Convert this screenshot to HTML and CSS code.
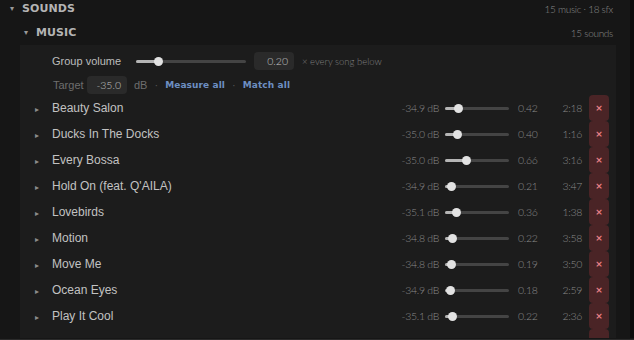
FILE: index.html
```html
<!DOCTYPE html>
<html lang="en">
<head>
  <meta charset="UTF-8" />
  <title>Sounds</title>
  <link rel="stylesheet" href="styles.css">
</head>
<body>
  <div class="screen">
    <div class="main">
      <div class="head head-top">
        <span class="caret">▾</span>
        <span class="head-title">SOUNDS</span>
        <span class="head-meta">15 music · 18 sfx</span>
      </div>
      <div class="head head-sub">
        <span class="caret">▾</span>
        <span class="head-title">MUSIC</span>
        <span class="head-meta">15 sounds</span>
      </div>

      <div class="panel">
        <div class="group-row">
          <span class="label">Group volume</span>
          <div class="slider wide"><div class="fill" style="width:20%"></div><div class="thumb" style="left:20%"></div></div>
          <div class="box">0.20</div>
          <span class="hint">× every song below</span>
        </div>
        <div class="target-row">
          <span class="label dim">Target</span>
          <div class="box">-35.0</div>
          <span class="dim">dB</span>
          <span class="sep">·</span>
          <a class="link">Measure all</a>
          <span class="sep">·</span>
          <a class="link">Match all</a>
        </div>

        <div class="songs">
          <div class="song"><span class="arrow">▸</span><span class="name">Beauty Salon</span><span class="db">-34.9 dB</span><div class="slider"><div class="fill" style="width:21%"></div><div class="thumb" style="left:21%"></div></div><span class="val">0.42</span><span class="dur">2:18</span><button class="del">×</button></div>
          <div class="song"><span class="arrow">▸</span><span class="name">Ducks In The Docks</span><span class="db">-35.0 dB</span><div class="slider"><div class="fill" style="width:20%"></div><div class="thumb" style="left:20%"></div></div><span class="val">0.40</span><span class="dur">1:16</span><button class="del">×</button></div>
          <div class="song"><span class="arrow">▸</span><span class="name">Every Bossa</span><span class="db">-35.0 dB</span><div class="slider"><div class="fill" style="width:33%"></div><div class="thumb" style="left:33%"></div></div><span class="val">0.66</span><span class="dur">3:16</span><button class="del">×</button></div>
          <div class="song"><span class="arrow">▸</span><span class="name">Hold On (feat. Q'AILA)</span><span class="db">-34.9 dB</span><div class="slider"><div class="fill" style="width:10.5%"></div><div class="thumb" style="left:10.5%"></div></div><span class="val">0.21</span><span class="dur">3:47</span><button class="del">×</button></div>
          <div class="song"><span class="arrow">▸</span><span class="name">Lovebirds</span><span class="db">-35.1 dB</span><div class="slider"><div class="fill" style="width:18%"></div><div class="thumb" style="left:18%"></div></div><span class="val">0.36</span><span class="dur">1:38</span><button class="del">×</button></div>
          <div class="song"><span class="arrow">▸</span><span class="name">Motion</span><span class="db">-34.8 dB</span><div class="slider"><div class="fill" style="width:11%"></div><div class="thumb" style="left:11%"></div></div><span class="val">0.22</span><span class="dur">3:58</span><button class="del">×</button></div>
          <div class="song"><span class="arrow">▸</span><span class="name">Move Me</span><span class="db">-34.8 dB</span><div class="slider"><div class="fill" style="width:9.5%"></div><div class="thumb" style="left:9.5%"></div></div><span class="val">0.19</span><span class="dur">3:50</span><button class="del">×</button></div>
          <div class="song"><span class="arrow">▸</span><span class="name">Ocean Eyes</span><span class="db">-34.9 dB</span><div class="slider"><div class="fill" style="width:9%"></div><div class="thumb" style="left:9%"></div></div><span class="val">0.18</span><span class="dur">2:59</span><button class="del">×</button></div>
          <div class="song"><span class="arrow">▸</span><span class="name">Play It Cool</span><span class="db">-35.1 dB</span><div class="slider"><div class="fill" style="width:11%"></div><div class="thumb" style="left:11%"></div></div><span class="val">0.22</span><span class="dur">2:36</span><button class="del">×</button></div>
          <div class="song song-peek"><button class="del"></button></div>
        </div>
      </div>
    </div>
    <div class="scrollbar"></div>
  </div>
  <div class="bottom-strip"></div>
</body>
</html>
```

FILE: styles.css
```css
body {
  margin: 0;
  background: #161616;
  color: #c4c4c4;
  font-family: 'Liberation Sans', Arial, sans-serif;
  overflow: hidden;
  height: 340px;
}

.screen {
  display: flex;
  height: 338px;
  width: 634px;
  overflow: hidden;
}

.main {
  flex: 1;
  overflow: hidden;
}

.scrollbar {
  width: 4px;
  background: #0c0c0c;
}

.bottom-strip {
  height: 1px;
  margin-top: 1px;
  background: #2b2b2b;
}

/* section headers */
.head {
  display: flex;
  align-items: center;
  padding-right: 17px;
}

.head-top {
  height: 17px;
  padding-left: 10px;
}

.head-sub {
  height: 17px;
  margin-top: 7px;
  padding-left: 24px;
}

.caret {
  font-size: 8px;
  color: #999;
  width: 12px;
  font-family: 'DejaVu Sans', sans-serif;
}

.head-title {
  font-family: 'DejaVu Sans', sans-serif;
  font-weight: bold;
  font-size: 11px;
  color: #b4b4b4;
  letter-spacing: 0.1px;
}

.head-meta {
  margin-left: auto;
  font-family: Lato, 'Open Sans', sans-serif;
  font-weight: 300;
  font-size: 10px;
  color: #8a8a8a;
  letter-spacing: -0.3px;
}

/* group panel */
.panel {
  margin: 4px 14px 0 20px;
  padding-top: 7px;
  background: #1c1c1c;
  height: 310px;
}

.group-row, .target-row {
  display: flex;
  align-items: center;
  height: 18px;
  padding-left: 32px;
}

.target-row {
  margin-top: 6px;
  padding-left: 33px;
}

.label {
  font-size: 11px;
  color: #bdbdbd;
  width: 84px;
}

.target-row .label {
  width: 34px;
}

.dim {
  color: #6e6e6e;
  font-size: 11px;
}

.box {
  width: 40px;
  height: 18px;
  box-sizing: border-box;
  padding-right: 6px;
  background: #2a2a2a;
  border-radius: 4px;
  text-align: right;
  line-height: 18px;
  font-family: Lato, 'Open Sans', sans-serif;
  font-weight: 300;
  font-size: 10.5px;
  color: #c4c4c4;
}

.group-row .box {
  margin-left: 8px;
}

.target-row .box {
  margin-right: 7px;
}

.hint {
  margin-left: 8px;
  font-family: Lato, 'Open Sans', sans-serif;
  font-weight: 300;
  font-size: 9.5px;
  color: #7c7c7c;
}

.sep {
  color: #555;
  font-size: 11px;
  margin: 0 7px;
}

.link {
  font-family: 'DejaVu Sans', sans-serif;
  font-weight: bold;
  font-size: 9px;
  color: #6d8fc2;
  letter-spacing: 0.1px;
}

/* sliders */
.slider {
  position: relative;
  width: 64px;
  height: 3px;
  background: #444;
  border-radius: 2px;
}

.slider.wide {
  width: 110px;
}

.fill {
  height: 100%;
  background: #b5b5b5;
  border-radius: 2px;
}

.thumb {
  position: absolute;
  top: 50%;
  width: 9px;
  height: 9px;
  margin: -4.5px 0 0 -4.5px;
  border-radius: 50%;
  background: #e2e2e2;
}

/* songs */
.songs {
  margin-top: 1px;
}

.song {
  display: flex;
  align-items: center;
  height: 26px;
  padding: 0 7px 0 15px;
}

.song-peek {
  justify-content: flex-end;
}

.arrow {
  width: 17px;
  font-size: 8px;
  color: #8c8c8c;
  font-family: 'DejaVu Sans', sans-serif;
  padding-top: 2px;
}

.name {
  flex: 1;
  font-size: 12px;
  color: #c2c2c2;
}

.db, .val, .dur {
  font-family: Lato, 'Open Sans', sans-serif;
  font-weight: 300;
  font-size: 10.5px;
  color: #8a8a8a;
  letter-spacing: -0.3px;
}

.db {
  margin-right: 6px;
}

.val {
  width: 32px;
  margin-left: 9px;
}

.dur {
  width: 32px;
  text-align: right;
  margin-right: 7px;
}

.del {
  width: 20px;
  height: 26px;
  border: none;
  padding: 0;
  border-radius: 4px;
  background: #4a2426;
  color: #e98088;
  font-size: 9px;
  font-weight: bold;
  font-family: 'DejaVu Sans', sans-serif;
  line-height: 26px;
}
```
